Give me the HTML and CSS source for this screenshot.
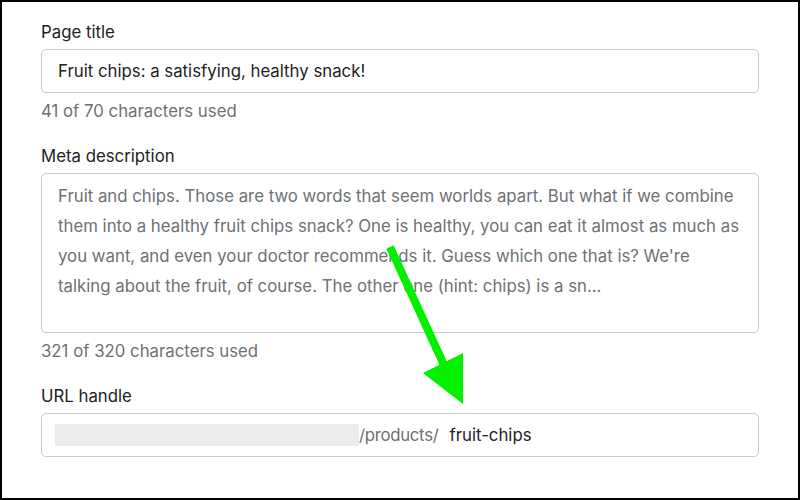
FILE: index.html
```html
<!DOCTYPE html>
<html lang="en">
<head>
<meta charset="utf-8">
<title>SEO fields</title>
<link rel="stylesheet" href="styles.css">
</head>
<body>
<div class="frame">
  <div class="field">
    <label class="label">Page title</label>
    <div class="input"><span class="value">Fruit chips: a satisfying, healthy snack!</span></div>
    <div class="help">41 of 70 characters used</div>
  </div>
  <div class="field">
    <label class="label">Meta description</label>
    <div class="textarea">
      <span class="line">Fruit and chips. Those are two words that seem worlds apart. But what if we combine</span>
      <span class="line">them into a healthy fruit chips snack? One is healthy, you can eat it almost as much as</span>
      <span class="line">you want, and even your doctor recommends it. Guess which one that is? We're</span>
      <span class="line">talking about the fruit, of course. The other one (hint: chips) is a sn...</span>
    </div>
    <div class="help">321 of 320 characters used</div>
  </div>
  <div class="field">
    <label class="label">URL handle</label>
    <div class="input url">
      <span class="redacted"></span>
      <span class="prefix">/products/</span>
      <span class="value">fruit-chips</span>
    </div>
  </div>
  <svg class="arrow" width="800" height="500" viewBox="0 0 800 500">
    <line x1="390" y1="247" x2="444" y2="365" stroke="#00f000" stroke-width="8"/>
    <polygon points="423,373 463,353 463,404" fill="#00f000"/>
  </svg>
</div>
</body>
</html>
```
FILE: styles.css
```css
* { box-sizing: border-box; }
html, body { margin: 0; padding: 0; background: #fff; }
.frame {
  position: relative;
  width: 800px;
  height: 500px;
  border: 2px solid #000;
  padding: 20px 39px 0 39px;
  display: flex;
  flex-direction: column;
  gap: 25px;
  font-family: Inter, "Liberation Sans", sans-serif;
  font-size: 16.8px;
  color: #202223;
}
.field { display: flex; flex-direction: column; }
.label { display: block; line-height: 20px; margin-bottom: 7px; }
.input {
  height: 44px;
  border: 1px solid #c9cccf;
  border-radius: 5px;
  display: flex;
  align-items: center;
  padding: 0 16px;
}
.value { color: #202223; white-space: nowrap; }
.help { color: #6d7175; line-height: 20px; margin-top: 8px; }
.textarea {
  height: 160px;
  border: 1px solid #c9cccf;
  border-radius: 5px;
  padding: 7px 16px;
  color: #6d7175;
  display: flex;
  flex-direction: column;
}
.line { display: block; line-height: 30px; white-space: nowrap; }
.url { padding-left: 13px; }
.redacted {
  width: 304px;
  height: 22px;
  background: #ebebeb;
  flex: none;
}
.prefix { color: #6d7175; margin-left: 0; margin-right: 11px; letter-spacing: -0.3px; }
.arrow { position: absolute; left: -2px; top: -2px; pointer-events: none; }
```
